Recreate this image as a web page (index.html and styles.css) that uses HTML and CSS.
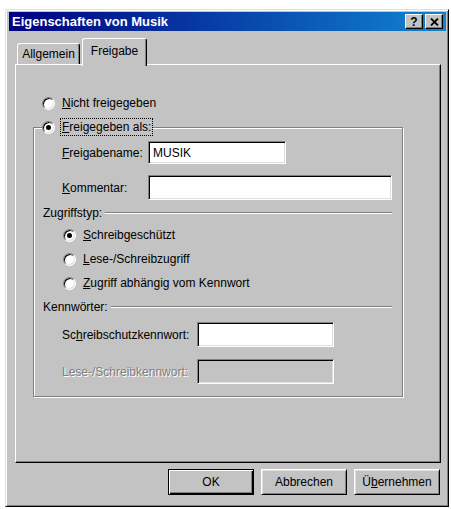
FILE: index.html
```html
<!DOCTYPE html>
<html lang="de">
<head>
    <meta charset="UTF-8">
    <title>Eigenschaften von Musik</title>
    <link rel="stylesheet" href="styles.css">
</head>
<body>
    <div class="window">
        <!-- Title bar -->
        <div class="titlebar">
            <span class="title">Eigenschaften von Musik</span>
            <span class="title-btn help">?</span>
            <span class="title-btn close">
                <svg width="9" height="8" viewBox="0 0 9 8"><path d="M1 0.5 L8 7.5 M8 0.5 L1 7.5" stroke="#000" stroke-width="1.8" fill="none"/></svg>
            </span>
        </div>

        <!-- Tabs -->
        <div class="tabs">
            <div class="tab">Allgemein</div>
            <div class="tab active">Freigabe</div>
        </div>

        <div class="panel">
            <div class="option top">
                <span class="radio"></span>
                <span class="opt-text"><u>N</u>icht freigegeben</span>
            </div>

            <fieldset class="share">
                <legend class="option">
                    <span class="radio checked"></span>
                    <span class="focus"><u>F</u>reigegeben als:</span>
                </legend>

                <div class="field row-name">
                    <span class="field-label short"><u>F</u>reigabename:</span>
                    <input type="text" class="input name" value="MUSIK">
                </div>
                <div class="field row-comment">
                    <span class="field-label short"><u>K</u>ommentar:</span>
                    <input type="text" class="input comment" value="">
                </div>

                <div class="sep sep-access">
                    <span>Zugriffstyp:</span>
                    <span class="sep-line"></span>
                </div>
                <div class="option sub first">
                    <span class="radio checked"></span>
                    <span class="opt-text"><u>S</u>chreibgeschützt</span>
                </div>
                <div class="option sub">
                    <span class="radio"></span>
                    <span class="opt-text"><u>L</u>ese-/Schreibzugriff</span>
                </div>
                <div class="option sub">
                    <span class="radio"></span>
                    <span class="opt-text"><u>Z</u>ugriff abhängig vom Kennwort</span>
                </div>

                <div class="sep sep-pass">
                    <span>Kennwörter:</span>
                    <span class="sep-line"></span>
                </div>
                <div class="field row-ro">
                    <span class="field-label long">Sc<u>h</u>reibschutzkennwort:</span>
                    <input type="password" class="input pass">
                </div>
                <div class="field row-rw">
                    <span class="field-label long disabled">Lese-/Schreibkennwort:</span>
                    <input type="password" class="input pass" disabled>
                </div>
            </fieldset>
        </div>

        <!-- Dialog buttons -->
        <div class="buttons">
            <button class="btn default">OK</button>
            <button class="btn">Abbrechen</button>
            <button class="btn">Ü<u>b</u>ernehmen</button>
        </div>
    </div>
</body>
</html>
```

FILE: styles.css
```css
body {
    margin: 0;
    background: #fff;
    font-family: "Liberation Sans", Arial, sans-serif;
    font-size: 12px;
    color: #000;
}

.window {
    margin: 9px 0 0 5px;
    width: 444px;
    height: 498px;
    box-sizing: border-box;
    background: #c3c3c3;
    border: 1px solid;
    border-color: #dfdfdf #000 #000 #dfdfdf;
    box-shadow: inset 1px 1px #fff, inset -1px -1px #808080;
    padding: 2px 2px 0 3px;
}

/* title bar */
.titlebar {
    height: 19px;
    display: flex;
    align-items: center;
    padding: 0 3px 0 3px;
    background: linear-gradient(to right, #000080, #1084d0);
}
.title {
    flex: 1;
    color: #fff;
    font-weight: bold;
    font-size: 13px;
}
.title-btn {
    width: 18px;
    height: 15px;
    box-sizing: border-box;
    margin-left: 2px;
    background: #c3c3c3;
    border: 1px solid;
    border-color: #fff #000 #000 #fff;
    box-shadow: inset -1px -1px #808080;
    display: flex;
    align-items: center;
    justify-content: center;
    font-weight: bold;
    font-size: 12px;
    line-height: 1;
}

/* tabs */
.tabs {
    margin-top: 7px;
    height: 26px;
    display: flex;
    align-items: flex-end;
    padding-left: 8px;
}
.tab {
    height: 21px;
    box-sizing: border-box;
    padding: 0 7px;
    margin-right: 2px;
    border: 1px solid;
    border-bottom: none;
    border-color: #fff #000 #000 #fff;
    border-radius: 3px 3px 0 0;
    box-shadow: inset -1px 0 #808080;
    display: flex;
    align-items: center;
    width: 63px;
    justify-content: center;
}
.tab.active {
    width: 65px;
    height: 28px;
    margin-bottom: -2px;
    padding-bottom: 3px;
    background: #c3c3c3;
    position: relative;
    z-index: 1;
}

/* property page */
.panel {
    margin: 0 5px 0 6px;
    height: 399px;
    box-sizing: border-box;
    border: 1px solid;
    border-color: #fff #000 #000 #fff;
    box-shadow: inset -1px -1px #808080;
    padding: 30px 0 0 17px;
}

.option {
    display: flex;
    align-items: center;
    height: 16px;
}
.option.top {
    margin-left: 9px;
}
.opt-text {
    margin-left: 7px;
}
.radio {
    width: 13px;
    height: 13px;
    box-sizing: border-box;
    flex: none;
    border-radius: 50%;
    background: #fff;
    border: 1px solid;
    border-color: #808080 #fff #fff #808080;
    box-shadow: inset 1px 1px #000, inset -1px -1px #dfdfdf;
    position: relative;
}
.radio.checked::after {
    content: "";
    position: absolute;
    left: 3px;
    top: 3px;
    width: 5px;
    height: 5px;
    border-radius: 50%;
    background: #000;
}

.share {
    width: 370px;
    box-sizing: border-box;
    margin: 7px 0 0 0;
    padding: 5px 10px 12px 9px;
    border: 1px solid #808080;
    box-shadow: inset 1px 1px #fff, 1px 1px #fff;
    min-width: 0;
}
.share legend {
    padding: 0;
    margin: 0 0 0 -1px;
    height: 18px;
    background: #c3c3c3;
}
.focus {
    margin-left: 5px;
    padding: 0 1px;
    border: 1px dotted #000;
    line-height: 16px;
}

.field {
    display: flex;
    align-items: center;
    margin-left: 19px;
}
.field-label.short {
    width: 86px;
}
.field-label.long {
    width: 135px;
}
.field-label.disabled {
    color: #808080;
    text-shadow: 1px 1px #fff;
}
.row-name { margin-top: 0; }
.row-comment { margin-top: 11px; }
.row-ro { margin-top: 8px; }
.row-rw { margin-top: 12px; }

.input {
    box-sizing: border-box;
    margin: 0;
    padding: 2px 4px;
    height: 25px;
    font-family: "Liberation Sans", Arial, sans-serif;
    font-size: 12px;
    color: #000;
    background: #fff;
    border: 1px solid;
    border-color: #808080 #fff #fff #808080;
    box-shadow: inset 1px 1px #000, inset -1px -1px #dfdfdf;
    outline: none;
}
.input.name {
    width: 138px;
    height: 23px;
}
.input.comment {
    width: 245px;
}
.input.pass {
    width: 137px;
}
.input:disabled {
    background: #c3c3c3;
}

.sep {
    display: flex;
    align-items: center;
    height: 14px;
}
.sep-line {
    flex: 1;
    margin-left: 3px;
    border-top: 1px solid #808080;
    border-bottom: 1px solid #fff;
}
.sep-access { margin-top: 6px; }
.sep-pass { margin-top: 9px; }

.option.sub {
    margin-left: 20px;
    margin-top: 8px;
}
.option.sub.first {
    margin-top: 7px;
}

/* dialog buttons */
.buttons {
    display: flex;
    justify-content: flex-end;
    gap: 7px;
    margin: 6px 6px 0 0;
}
.btn {
    width: 86px;
    height: 26px;
    box-sizing: border-box;
    padding: 0;
    font-family: "Liberation Sans", Arial, sans-serif;
    font-size: 12px;
    color: #000;
    background: #c3c3c3;
    border: 1px solid;
    border-color: #fff #000 #000 #fff;
    box-shadow: inset 1px 1px #dfdfdf, inset -1px -1px #808080;
}
.btn.default {
    border-color: #000;
    box-shadow: inset 1px 1px #fff, inset -1px -1px #000, inset -2px -2px #808080;
}
```
